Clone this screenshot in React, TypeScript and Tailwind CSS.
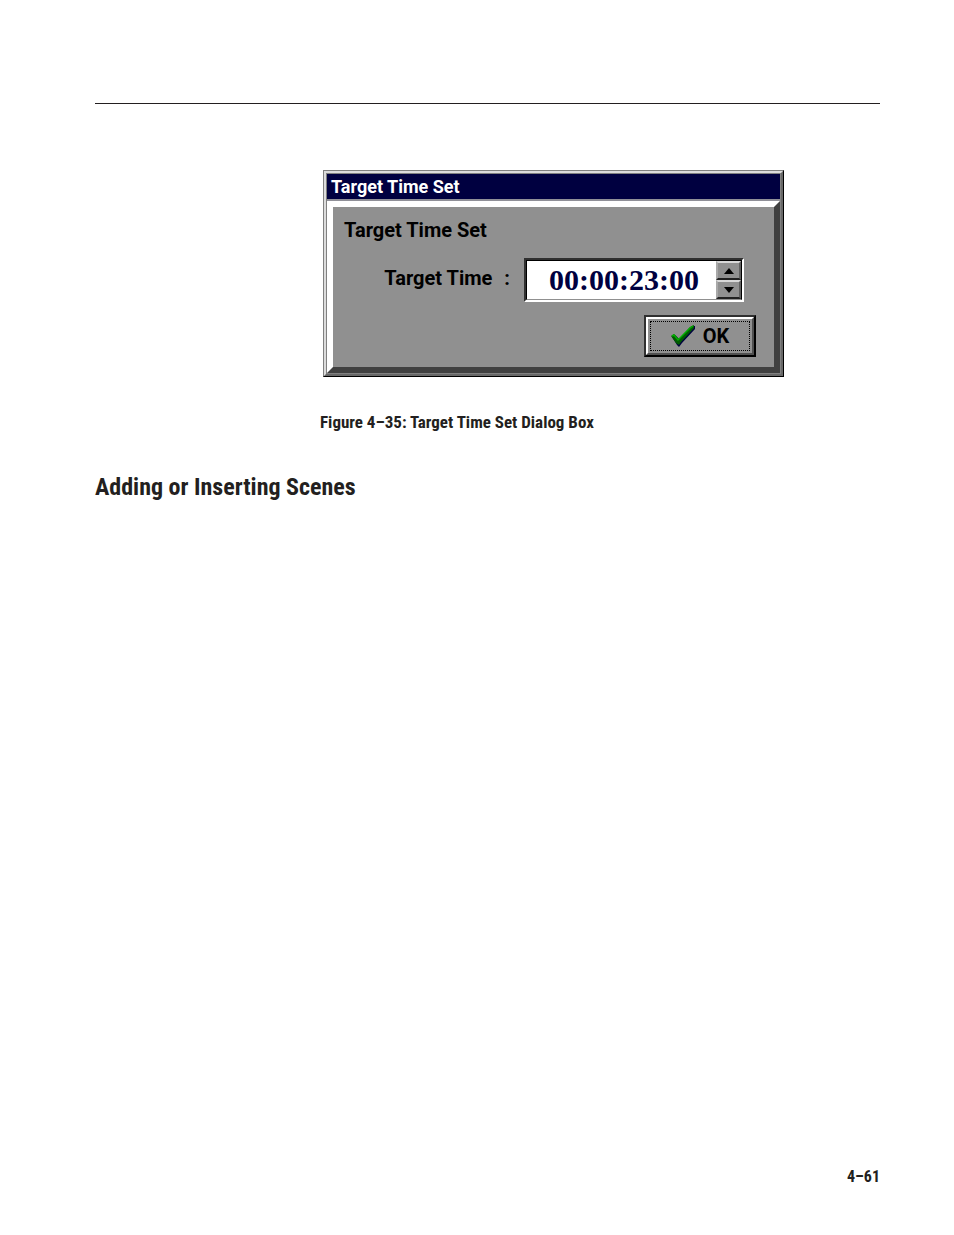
import { useState } from 'react';

const CheckMark = () => (
  <svg width="24" height="22" viewBox="0 0 24 22" aria-hidden="true">
    <path d="M1 12 L4 10 L8 14 L19 3 L21 1 L24 1 L24 4 L11 18 L8 22 L6 20 Z" fill="#000040" />
    <path d="M0 11 L3 9 L8 14 L19 2 L23 0 L23 3 L10 17 L8 20 L5 18 Z" fill="#005c00" />
    <path d="M1 11 L3 10 L7 15 L19 3 L22 1" fill="none" stroke="#00b000" strokeWidth="1.5" />
  </svg>
);

const SpinArrow = ({ down }: { down?: boolean }) => (
  <svg width="10" height="6" viewBox="0 0 10 6" aria-hidden="true">
    <path d={down ? 'M0 0 H10 L5 6 Z' : 'M0 6 H10 L5 0 Z'} fill="#000" />
  </svg>
);

const spinClass =
  'flex flex-1 items-center justify-center border-2 border-t-[#d8d8d8] border-l-[#a8a8a8] border-r-[#606060] border-b-[#202020] bg-[#909090]';

const TargetTimeDialog = () => {
  const [time, setTime] = useState('00:00:23:00');

  // the seconds field is the one the arrows change
  const step = (amount: number) => {
    const parts = time.split(':');
    const seconds = (Number(parts[2]) + amount + 60) % 60;
    parts[2] = String(seconds).padStart(2, '0');
    setTime(parts.join(':'));
  };

  return (
    <div
      role="dialog"
      aria-labelledby="dialog-title"
      className="border border-t-[#808080] border-l-[#808080] border-r-black border-b-black font-[Roboto,'Liberation_Sans',sans-serif] text-black"
    >
      <div className="border-2 border-t-[#dcdcdc] border-l-[#dcdcdc] border-r-[#686868] border-b-[#686868]">
        <div className="border border-[#808080]">
          <h2
            id="dialog-title"
            className="h-[27px] border-b-2 border-[#909098] bg-[#000040] px-1 text-[18px] leading-[25px] font-bold text-white"
          >
            Target Time Set
          </h2>
          <form
            className="border-6 border-t-white border-l-white border-r-[#404040] border-b-[#404040] bg-[#909090] pt-[11px] pr-[18px] pb-[10px] pl-[11px]"
            onSubmit={(e) => e.preventDefault()}
          >
            <p className="text-[20px] leading-6 font-bold">Target Time Set</p>
            <div className="mt-4 flex items-center justify-end pr-3">
              <label htmlFor="target-time" className="flex gap-3 pr-[14px] pb-1 text-[20px] leading-6 font-bold">
                <span>Target Time</span>
                <span>:</span>
              </label>
              <div className="flex h-[44px] w-[220px] border-2 border-t-[#303030] border-l-[#303030] border-r-white border-b-white">
                <div className="flex w-full border border-black border-b-[#909090] bg-white">
                  <input
                    id="target-time"
                    value={time}
                    onChange={(e) => setTime(e.target.value)}
                    className="min-w-0 flex-1 bg-white pl-[22px] font-['Liberation_Serif',serif] text-[30px] leading-9 font-bold text-[#000040] outline-none"
                  />
                  <div className="flex w-[25px] flex-col">
                    <button type="button" aria-label="Increase" className={spinClass} onClick={() => step(1)}>
                      <SpinArrow />
                    </button>
                    <button type="button" aria-label="Decrease" className={spinClass} onClick={() => step(-1)}>
                      <SpinArrow down />
                    </button>
                  </div>
                </div>
              </div>
            </div>
            <div className="mt-[13px] flex justify-end">
              <button
                type="submit"
                className="h-[42px] w-[112px] border-2 border-t-[#303030] border-l-[#303030] border-r-black border-b-black"
              >
                <span className="flex h-full border-2 border-t-white border-l-white border-r-[#505050] border-b-[#505050] p-[2px]">
                  <span className="flex flex-1 items-center justify-center gap-2 border border-dotted border-black text-[20px] font-bold">
                    <CheckMark />
                    OK
                  </span>
                </span>
              </button>
            </div>
          </form>
        </div>
      </div>
    </div>
  );
};

const App = () => {
  return (
    <div className="flex min-h-screen flex-col bg-white pr-[74px] pl-[95px] font-['Roboto_Condensed',Roboto,sans-serif] text-[#231f20]">
      <header className="h-[104px] border-b border-[#231f20]" />
      <main className="flex-1">
        <figure className="mt-[66px] ml-[228px] max-w-[461px]">
          <TargetTimeDialog />
          <figcaption className="-ml-[3px] pt-[33px] text-[17px] leading-6 font-bold">
            Figure 4–35: Target Time Set Dialog Box
          </figcaption>
        </figure>
        <h1 className="mt-[37px] text-[24px] leading-8 font-bold">Adding or Inserting Scenes</h1>
      </main>
      <footer className="pb-[46px] text-right text-[16px] leading-6 font-bold">4–61</footer>
    </div>
  );
};

export default App;
